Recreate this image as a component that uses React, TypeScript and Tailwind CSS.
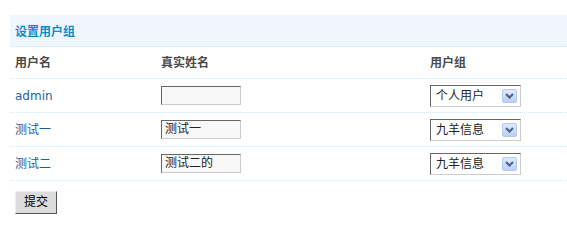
import React from "react"

const font = { fontFamily: '"DejaVu Sans", "Noto Sans CJK SC", sans-serif' }

const rows = [
	{ name: "admin", real: "", group: "个人用户" },
	{ name: "测试一", real: "测试一", group: "九羊信息" },
	{ name: "测试二", real: "测试二的", group: "九羊信息" },
]

function FakeSelect({ value }: { value: string }) {
	return (
		<div className="flex h-[22px] w-[91px] items-center justify-between border border-t-[#666] border-l-[#666] border-r-[#ccc] border-b-[#ccc] bg-white pl-[5px] pr-[3px] text-[12px] text-[#222]">
			<span>{value}</span>
			<span className="flex h-[14px] w-[15px] items-center justify-center rounded-[2px] border border-[#b3c9f1] bg-gradient-to-b from-[#e0eafd] to-[#b9cff8]">
				<svg width="9" height="6" viewBox="0 0 9 6">
					<path d="M1 1 L4.5 4.5 L8 1" stroke="#4d6185" strokeWidth="2" fill="none" />
				</svg>
			</span>
		</div>
	)
}

export default function App() {
	return (
		<div className="w-[567px] h-[236px] bg-white pl-[10px] pt-[15px]" style={font}>
			<div className="flex h-[32px] items-center border-b border-dotted border-[#d3e4f3] bg-[#eff6fe] pl-[5px] pt-[2px] text-[12px] font-bold text-[#0d8bc6]">
				设置用户组
			</div>
			<div className="grid h-[32px] grid-cols-[146px_269px_1fr] items-center border-b border-dotted border-[#d3e4f3] pl-[5px] text-[12px] font-bold text-[#4a4a4a]">
				<span>用户名</span>
				<span>真实姓名</span>
				<span>用户组</span>
			</div>
			{rows.map((r) => (
				<div
					key={r.name}
					className="grid h-[34px] grid-cols-[146px_269px_1fr] items-center border-b border-dotted border-[#d3e4f3] pl-[5px] text-[12px]"
				>
					<a className="text-[#1d5f9e]" href="#">
						{r.name}
					</a>
					<div className="h-[19px] w-[80px] border border-t-[#666] border-l-[#666] border-r-[#ccc] border-b-[#ccc] bg-[#f8f8f8] pl-[3px] text-[12px] leading-[16px] text-[#222]">
						{r.real}
					</div>
					<FakeSelect value={r.group} />
				</div>
			))}
			<div className="pl-[5px] pt-[8px]">
				<button
					type="button"
					className="h-[23px] w-[42px] border border-t-[#eee] border-l-[#eee] border-r-[#555] border-b-[#555] bg-[#dcdcdc] text-[12px] text-black"
				>
					提交
				</button>
			</div>
		</div>
	)
}
